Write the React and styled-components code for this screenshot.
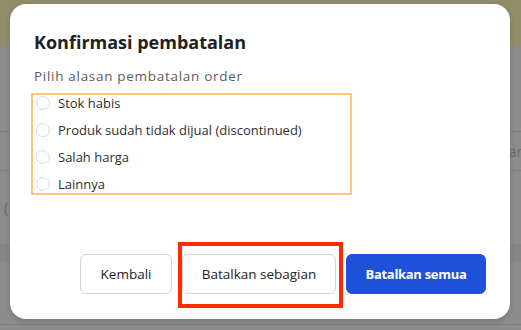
import React, { useState } from "react";
import styled, { createGlobalStyle } from "styled-components";

const GlobalStyle = createGlobalStyle`
    html, body {
        margin: 0;
        padding: 0;
        background: #8c8c8c;
        font-family: 'Open Sans', 'Liberation Sans', Arial, sans-serif;
    }
`

const Page = styled.div`
    width: 521px;
    height: 330px;
    overflow: hidden;
    position: relative;
    background: #8c8c8c;
    display: flex;
    flex-direction: column;
`
const TopBar = styled.div`
    height: 46px;
    background: #8f8d6a;
`
const BgRow = styled.div`
    height: ${props => props.h}px;
    border-bottom: 1px solid ${props => props.line ? '#7e7e7e' : 'transparent'};
    background: ${props => props.dark ? '#868686' : 'transparent'};
    color: #6a6a6a;
    font-size: 14px;
    display: flex;
    align-items: center;
    justify-content: space-between;
    padding: 0 0 0 4px;
`
const BgCell = styled.span`
    margin-right: ${props => props.edge ? -4 : 0}px;
`

const Overlay = styled.div`
    position: absolute;
    inset: 0;
    display: flex;
    justify-content: flex-start;
    padding: 4px 0 0 10px;
`
const Modal = styled.div`
    width: 500px;
    height: 315px;
    box-sizing: border-box;
    background: #fff;
    border-radius: 16px;
    box-shadow: 0 2px 6px rgba(0, 0, 0, 0.15);
    padding: 26px 24px 25px 23px;
    display: flex;
    flex-direction: column;
`
const Title = styled.h2`
    margin: 0 0 0 1px;
    font-size: 18px;
    line-height: 24px;
    font-weight: 700;
    color: #212121;
`
const Subtitle = styled.p`
    margin: 13px 0 0 1px;
    font-size: 13.5px;
    letter-spacing: 0.7px;
    line-height: 18px;
    color: #5c5c5c;
`
const ReasonBox = styled.div`
    margin: 8px 0 0 -2px;
    width: 321px;
    box-sizing: border-box;
    border: 2px solid #ffc57f;
    padding: 0 0 1px 3px;
    display: flex;
    flex-direction: column;
    gap: 11px;
`
const Reason = styled.label`
    display: flex;
    align-items: center;
    gap: 8px;
    height: 16px;
    font-size: 13px;
    color: #2e2e2e;
    cursor: pointer;
`
const Radio = styled.span`
    width: 12px;
    height: 12px;
    border-radius: 50%;
    border: 1px solid ${props => props.checked ? '#1f50d8' : '#d6d9e0'};
    box-shadow: ${props => props.checked ? 'inset 0 0 0 3px #fff, inset 0 0 0 8px #1f50d8' : 'none'};
    flex-shrink: 0;
`
const Actions = styled.div`
    margin-top: auto;
    display: flex;
    justify-content: flex-end;
    gap: 10px;
`
const Button = styled.button`
    position: relative;
    width: ${props => props.w}px;
    height: 40px;
    padding: 0;
    border-radius: 6px;
    font-family: inherit;
    cursor: pointer;
    border: 1px solid ${props => props.primary ? '#1f50d8' : '#d4d4d4'};
    background: ${props => props.primary ? '#1f50d8' : '#fff'};
    color: ${props => props.primary ? '#fff' : '#222'};
    font-size: ${props => props.primary ? 13 : 13.5}px;
    font-weight: ${props => props.primary ? 700 : 500};
    letter-spacing: ${props => props.primary ? -0.3 : 0}px;
`
const Highlight = styled.span`
    position: absolute;
    top: -13px;
    bottom: -15px;
    left: -5px;
    right: -8px;
    border: 4px solid #ff2a00;
    pointer-events: none;
`

const reasons = [
    'Stok habis',
    'Produk sudah tidak dijual (discontinued)',
    'Salah harga',
    'Lainnya',
]

const App = () => {
    const [selected, setSelected] = useState(null)

    return (
        <Page>
            <GlobalStyle />
            <TopBar />
            <BgRow h={85} line />
            <BgRow h={38} line>
                <BgCell />
                <BgCell edge>an</BgCell>
            </BgRow>
            <BgRow h={72}>(</BgRow>
            <BgRow h={17} dark />
            <BgRow h={62} line />
            <Overlay>
                <Modal>
                    <Title>Konfirmasi pembatalan</Title>
                    <Subtitle>Pilih alasan pembatalan order</Subtitle>
                    <ReasonBox>
                        {reasons.map((item, i) => (
                            <Reason key={item} onClick={() => setSelected(i)}>
                                <Radio checked={selected === i} />
                                {item}
                            </Reason>
                        ))}
                    </ReasonBox>
                    <Actions>
                        <Button w={92}>Kembali</Button>
                        <Button w={154}>
                            Batalkan sebagian
                            <Highlight />
                        </Button>
                        <Button w={140} primary>Batalkan semua</Button>
                    </Actions>
                </Modal>
            </Overlay>
        </Page>
    )
}

export default App
